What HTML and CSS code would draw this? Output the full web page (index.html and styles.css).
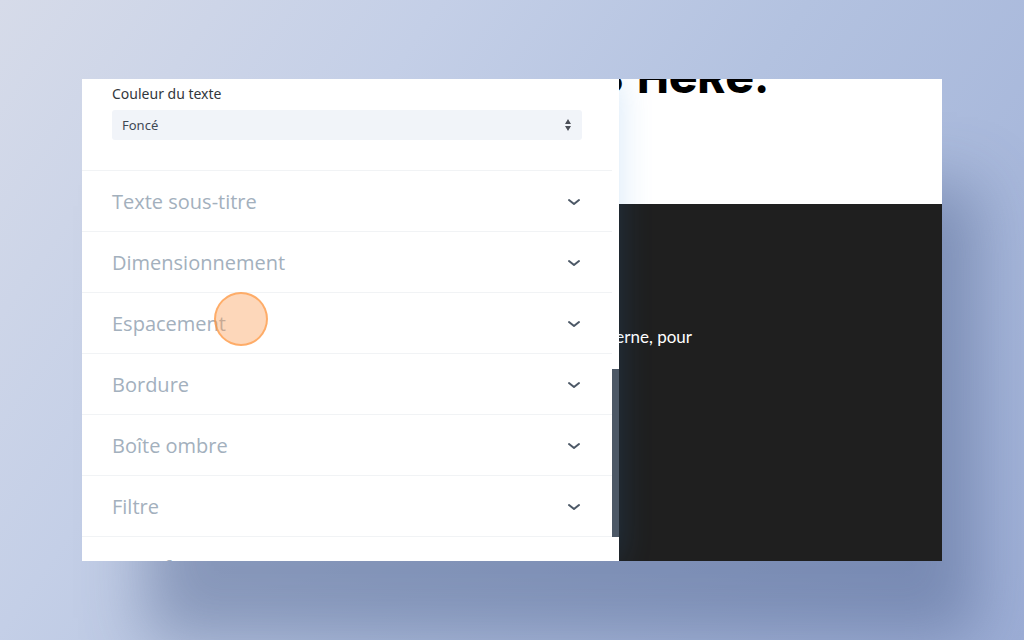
FILE: index.html
```html
<!DOCTYPE html>
<html lang="fr">
<head>
  <meta charset="UTF-8">
  <title>Couleur du texte</title>
  <link rel="stylesheet" href="styles.css">
</head>

<body>
  <div class="window">
    <div class="panel">
      <div class="panel-scroll">
        <div class="field">
          <label for="text-color">Couleur du texte</label>
          <div class="select-wrap">
            <select id="text-color">
              <option>Foncé</option>
              <option>Clair</option>
            </select>
            <svg class="select-arrows" viewBox="0 0 8 14"><path d="M4 1 7 6H1zM4 13 1 8h6z"/></svg>
          </div>
        </div>

        <button class="toggle">Texte sous-titre <svg class="chevron" viewBox="0 0 16 16"><path d="M3 7l5 4 5-4"/></svg></button>
        <button class="toggle">Dimensionnement <svg class="chevron" viewBox="0 0 16 16"><path d="M3 7l5 4 5-4"/></svg></button>
        <button class="toggle"><span class="target">Espacement<span class="click"></span></span> <svg class="chevron" viewBox="0 0 16 16"><path d="M3 7l5 4 5-4"/></svg></button>
        <button class="toggle">Bordure <svg class="chevron" viewBox="0 0 16 16"><path d="M3 7l5 4 5-4"/></svg></button>
        <button class="toggle">Boîte ombre <svg class="chevron" viewBox="0 0 16 16"><path d="M3 7l5 4 5-4"/></svg></button>
        <button class="toggle">Filtre <svg class="chevron" viewBox="0 0 16 16"><path d="M3 7l5 4 5-4"/></svg></button>
        <button class="toggle">Transformer</button>
      </div>
      <div class="scrollbar"></div>
    </div>

    <div class="site">
      <div class="hero"><h1><span>S</span> <span>H<span class="round">e</span>R<span class="round">e</span>.</span></h1></div>
      <div class="intro"><p>moderne, pour</p></div>
    </div>
  </div>
</body>
</html>
```
FILE: styles.css
```css
* { box-sizing: border-box; }

body {
  margin: 0;
  height: 100vh;
  padding: 79px 82px;
  overflow: hidden;
  font-family: "Open Sans", "Noto Sans", sans-serif;
  background: linear-gradient(125deg, #d6dbe9 0%, #c4cfe7 30%, #b3c2e0 55%, #9daed6 100%);
}

.window {
  display: flex;
  height: 100%;
  box-shadow: 50px 92px 60px -14px rgba(70, 92, 135, .45);
}

/*********
 * panel *
 *********/
.panel {
  position: relative;  /* keeps its shadow over the site */
  z-index: 1;
  display: flex;
  flex: 0 0 62.4%;
  background: #fff;
  box-shadow: 0 0 32px rgba(43, 135, 218, .2);
  clip-path: inset(0 -40px 0 0);
}
.panel-scroll {
  flex: 1;
  overflow: hidden;
}

.field { padding: 4px 30px 30px; }
.field label {
  display: block;
  margin-bottom: 5px;
  font: 14px/22px "Noto Sans", sans-serif;
  color: #32373c;
}
.select-wrap { position: relative; }
.select-wrap select {
  display: block;
  width: 100%;
  height: 30px;
  padding: 0 10px;
  border: 0;
  border-radius: 3px;
  appearance: none;
  font: 13px "Noto Sans", sans-serif;
  color: #3e4854;
  background: #f1f4f9;
}
.select-arrows {
  position: absolute;
  top: 8px;
  right: 10px;
  width: 8px;
  height: 14px;
  fill: #4c5059;
}

.toggle {
  display: flex;
  align-items: center;
  justify-content: space-between;
  width: 100%;
  height: 61px;
  padding: 0 30px;
  border: 0;
  border-top: 1px solid #f1f3f5;
  font: 20px "Open Sans", "Noto Sans", sans-serif;
  color: #a3b0bd;
  background: none;
}
.chevron {
  width: 16px;
  height: 16px;
  fill: none;
  stroke: #4c5866;
  stroke-width: 2;
  stroke-linecap: round;
  stroke-linejoin: round;
}

/* click marker */
.target { position: relative; }
.click {
  position: absolute;
  top: -18px;
  right: -42px;
  width: 54px;
  height: 54px;
  border: 2px solid rgba(255, 145, 50, .6);
  border-radius: 50%;
  background: rgba(250, 160, 90, .42);
}

.scrollbar {
  flex: 0 0 7px;
  margin: 290px 0 24px;
  background: #4c5866;
}

/********
 * site *
 ********/
.site {
  display: flex;
  flex: 1;
  flex-direction: column;
  overflow: hidden;
  background: #1f1f1f;
}
/* text lines end at a fixed right edge and run under the panel */
.hero {
  display: flex;
  align-items: flex-start;
  justify-content: flex-end;
  height: 125px;
  padding-right: 173px;
  overflow: hidden;
  background: #fff;
}
.hero h1 {
  display: flex;
  gap: 14px;
  margin: -23px 0 0;
  font: 800 42px/44px Inter, sans-serif;
  color: #000;
  white-space: nowrap;
}
.hero .round {
  font-size: 48px;
  line-height: 40px;
}
.intro {
  display: flex;
  justify-content: flex-end;
  padding: 121px 250px 0 0;
}
.intro p {
  margin: 0;
  font: 17px/24px Lato, sans-serif;
  color: #fff;
  white-space: nowrap;
}
```
